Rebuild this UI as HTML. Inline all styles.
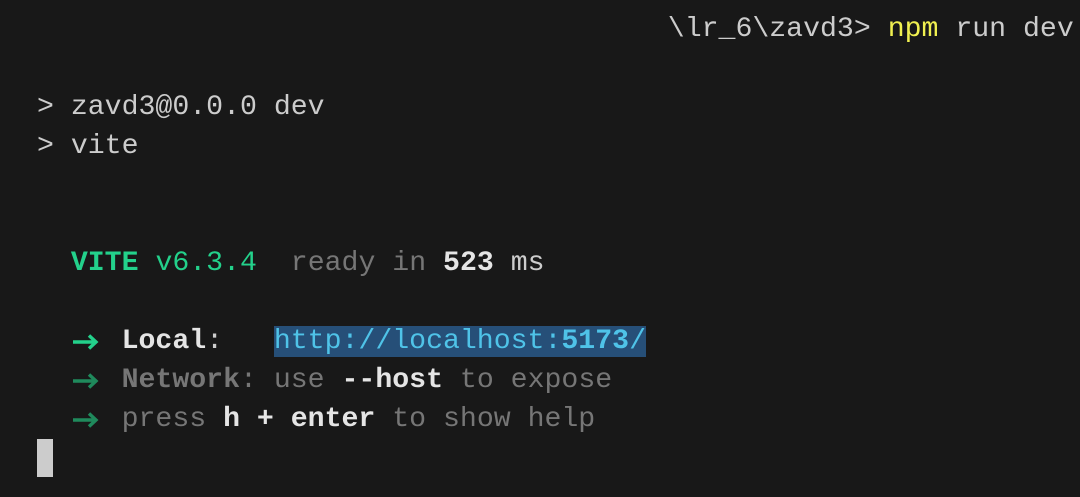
<!DOCTYPE html>
<html><head><meta charset="utf-8"><style>
html,body{margin:0;padding:0;background:#181818;width:1080px;height:497px;overflow:hidden}
.t{position:absolute;left:37px;top:-29px;font-family:"Liberation Mono",monospace;font-size:28.2px;color:#cccccc}
.l{height:39px;line-height:39px;white-space:pre}
.g{color:#23d18b;font-weight:bold}
.gv{color:#23d18b}
.d{color:#767676}
.b{font-weight:bold;color:#e5e5e5}
.a{display:inline-block;width:16.9px;height:39px;vertical-align:top;position:relative}
.a svg{position:absolute;left:0px;top:11px}
.u{color:#4fc3e8;background:#264f78}
.y{color:#f0f050}
.cur{display:inline-block;width:16px;height:38px;background:#cccccc;vertical-align:top}
</style></head><body>
<div class="t"><div class="l">                                      \  _      \       \</div><div class="l" style="margin-left:-12px">                                      \lr_6\zavd3&gt; <span class="y">npm</span> run dev</div><div class="l"> </div><div class="l">&gt; zavd3@0.0.0 dev</div><div class="l">&gt; vite</div><div class="l"> </div><div class="l"> </div><div class="l">  <span class="g">VITE</span> <span class="gv">v6.3.4</span>  <span class="d">ready in </span><span class="b">523</span> ms</div><div class="l"> </div><div class="l">  <span class="a"><svg width="28" height="18" viewBox="0 0 28 18"><path d="M2 9H25M18 2.5L25 9L18 15.5" stroke="#23d18b" stroke-width="3.4" fill="none"/></svg></span>  <span class="b">Local</span>:   <span class="u">http://localhost:<b>5173</b>/</span></div><div class="l">  <span class="a"><svg width="28" height="18" viewBox="0 0 28 18"><path d="M2 9H25M18 2.5L25 9L18 15.5" stroke="#1f8a5c" stroke-width="3.4" fill="none"/></svg></span>  <span class="d"><b>Network</b>: use </span><span class="b">--host</span><span class="d"> to expose</span></div><div class="l">  <span class="a"><svg width="28" height="18" viewBox="0 0 28 18"><path d="M2 9H25M18 2.5L25 9L18 15.5" stroke="#1f8a5c" stroke-width="3.4" fill="none"/></svg></span>  <span class="d">press </span><span class="b">h + enter</span><span class="d"> to show help</span></div><div class="l"><span class="cur"></span></div></div>
</body></html>
